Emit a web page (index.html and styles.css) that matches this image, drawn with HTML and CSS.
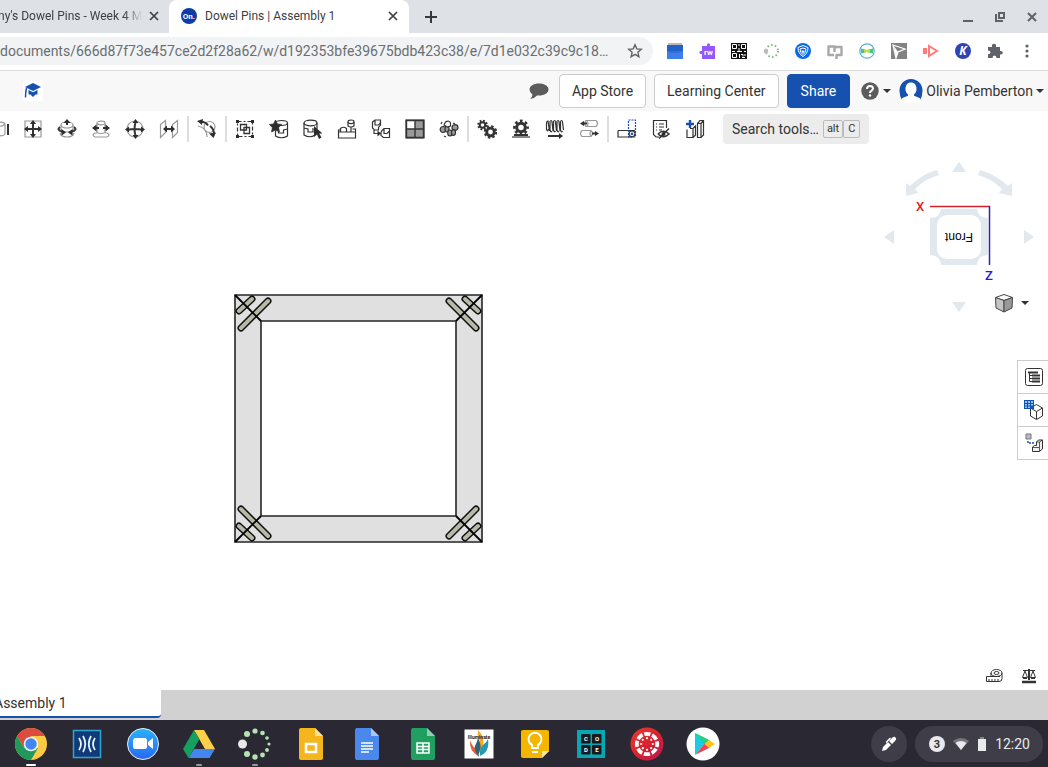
FILE: index.html
```html
<!DOCTYPE html>
<html lang="en">
<head>
<meta charset="utf-8">
<title>Dowel Pins | Assembly 1</title>
<link rel="stylesheet" href="styles.css">
</head>
<body>
<div class="screen">
  <header class="tabstrip">
    <div class="tab tab-back"><span class="tab-title fade">ny's Dowel Pins - Week 4 M</span>
      <button class="tab-close" aria-label="Close tab"><svg width="10" height="10" viewBox="0 0 10 10"><path d="M1 1l8 8M9 1l-8 8" stroke="#3c4043" stroke-width="1.7"/></svg></button></div>
    <div class="tab tab-active">
      <svg width="16" height="16" viewBox="0 0 16 16"><circle cx="8" cy="8" r="8" fill="#0d3ca6"/><text x="8" y="11" text-anchor="middle" class="fav-text">On.</text></svg>
      <span class="tab-title">Dowel Pins | Assembly 1</span>
      <button class="tab-close" aria-label="Close tab"><svg width="10" height="10" viewBox="0 0 10 10"><path d="M1 1l8 8M9 1l-8 8" stroke="#3c4043" stroke-width="1.7"/></svg></button></div>
    <button class="new-tab" aria-label="New tab"><svg width="12" height="12" viewBox="0 0 12 12"><path d="M6 0v12M0 6h12" stroke="#35383c" stroke-width="2"/></svg></button>
    <div class="window-controls">
      <button aria-label="Minimize"><svg width="12" height="12" viewBox="0 0 12 12"><path d="M1 10h10" stroke="#5f6368" stroke-width="2"/></svg></button>
      <button aria-label="Restore"><svg width="12" height="12" viewBox="0 0 12 12" fill="none" stroke="#5f6368" stroke-width="2"><path d="M5 2h5v5H5zM2 3v7h7"/></svg></button>
      <button aria-label="Close"><svg width="12" height="12" viewBox="0 0 12 12"><path d="M2 2l8 8M10 2l-8 8" stroke="#5f6368" stroke-width="2"/></svg></button>
    </div>
  </header>

  <div class="addressbar">
    <div class="url-pill">
      <span class="url">documents/666d87f73e457ce2d2f28a62/w/d192353bfe39675bdb423c38/e/7d1e032c39c9c18…</span>
      <button class="star" aria-label="Bookmark"><svg width="16" height="16" viewBox="0 0 16 16"><path d="M8 1.800l1.800 4.100 4.500.4-3.400 3 1 4.400L8 11.400l-3.900 2.300 1-4.400-3.400-3 4.500-.4z" fill="none" stroke="#5f6368" stroke-width="1.400"/></svg></button>
    </div>
    <div class="extensions">
      <button aria-label="Extension"><svg width="16" height="16" viewBox="0 0 16 16"><path d="M1 0h14v3H1z" fill="#b9bab5"/><path d="M0 2h16v14H0z" fill="#3f7ee8"/><path d="M0 2h16v6H0z" fill="#2462c8"/><path d="M0 8h16l-5 2H4z" fill="#2f6fd8"/></svg></button>
      <button aria-label="Read and write"><svg width="16" height="16" viewBox="0 0 16 16"><path d="M3 3h5V1.500q1.500-2.500 3 0V3h5v13H3v-5H1.500Q-1 9.500 1.500 8H3z" fill="#9557ff"/><text x="9.500" y="12" text-anchor="middle" class="rw">rw</text></svg></button>
      <button aria-label="QR code"><svg width="16" height="16" viewBox="0 0 16 16"><path d="M0 0h16v16H0z" fill="#111"/><g fill="none" stroke="#fff"><path d="M1.500 1.500h4v4h-4zM10.500 1.500h4v4h-4zM1.500 10.500h4v4h-4zM8 1v2M8 5v3M1 8.500h3M6 8.500h5M13 8.500h2M8.500 11v4M10 11.500h2v2M14 11v2M11 14.500h3"/></g></svg></button>
      <button aria-label="Loader"><svg width="16" height="16" viewBox="0 0 16 16"><circle cx="9" cy="8" r="6" fill="none" stroke="#84bd88" stroke-width="2" stroke-dasharray="1.600 2.200"/><circle cx="3" cy="8" r="2.300" fill="#bbb"/></svg></button>
      <button aria-label="Shield"><svg width="16" height="16" viewBox="0 0 16 16"><circle cx="8" cy="8" r="8" fill="#0969e8"/><path d="M8 2.500l5 2q0 6-5 9-5-3-5-9zM8 5l3 1q0 4-3 5.500Q5 10 5 6z" fill="none" stroke="#fff"/><path d="M8 10.200L6.500 8.500Q6.500 7 8 7.700q1.500-.7 1.500.8z" fill="#fff"/></svg></button>
      <button aria-label="Clip"><svg width="16" height="16" viewBox="0 0 16 16"><path d="M7 12H1.500V3.500H8V5.500M9 4h5.500v8H9.500v4M9.500 4H7.500V9" fill="none" stroke="#a8a8a8" stroke-width="2.400" stroke-linejoin="round"/></svg></button>
      <button aria-label="Bow tie"><svg width="16" height="16" viewBox="0 0 16 16"><circle cx="8" cy="8" r="7.200" fill="#fff" stroke="#5aaed0" stroke-width="1.200"/><path d="M2 5.500l6 1.500 6-1.500v5L8 9 2 10.500z" fill="#45c67a"/><path d="M5 6.400L8 7l3-.6v3.200L8 9l-3 .6z" fill="#c4dc3f"/></svg></button>
      <button aria-label="Pointer"><svg width="16" height="16" viewBox="0 0 16 16"><path d="M0 0h16v16H0z" fill="#828282"/><path d="M2 2l12 4-7 3-2 6z" fill="none" stroke="#fff" stroke-width="1.300"/><path d="M3 3l4 6-2 5z" fill="#fff"/></svg></button>
      <button aria-label="Recorder"><svg width="16" height="16" viewBox="0 0 16 16"><path d="M0 5h4v6H0z" fill="#ff7b78"/><path d="M6 3l8 5-8 5z" fill="#fff" stroke="#ff7b78" stroke-width="2"/></svg></button>
      <button aria-label="Kami"><svg width="16" height="16" viewBox="0 0 16 16"><circle cx="8" cy="8" r="8" fill="#2f43b2"/><text x="8" y="12" text-anchor="middle" class="kami">K</text></svg></button>
      <button aria-label="Extensions"><svg width="16" height="16" viewBox="0 0 16 16"><path d="M1 4h4Q4.500.8 7 .8T9 4h4v4q2.800-.5 2.800 1.800T13 11.500V15H9.500q0-2.500-2-2.500t-2 2.500H1v-3.800q2.500 0 2.500-1.900T1 7.500z" fill="#5f6368"/></svg></button>
      <button aria-label="Menu"><svg width="16" height="16" viewBox="0 0 16 16" fill="#5f6368"><circle cx="8" cy="3" r="1.600"/><circle cx="8" cy="8" r="1.600"/><circle cx="8" cy="13" r="1.600"/></svg></button>
    </div>
  </div>

  <div class="appbar">
    <button class="learn" aria-label="Tutorials"><svg width="18" height="18" viewBox="0 0 18 18" fill="#1651b0"><path d="M9 1l8 4-8 4-8-4z"/><path d="M4.500 8L9 10.200 13.500 8v4.500h-2L9 15l-2.500-2.500h-2z"/><path d="M2.500 6q-1 4-1 9.500" fill="none" stroke="#1651b0" stroke-width="1.500"/></svg></button>
    <div class="app-actions">
      <button class="plain comments" aria-label="Comments"><svg width="20" height="18" viewBox="0 0 20 18"><path d="M10 1.500c5.500 0 9.500 2.600 9.500 6s-4 6-9.500 6l-2-.1Q5.500 16.500 1 17q2.500-2 2.400-4.600Q.5 10.500.5 7.500c0-3.400 4-6 9.500-6z" fill="#5c5c5c"/></svg></button>
      <button class="btn">App Store</button>
      <button class="btn">Learning Center</button>
      <button class="btn btn-primary">Share</button>
      <button class="plain help" aria-label="Help"><svg width="18" height="18" viewBox="0 0 18 18"><circle cx="9" cy="9" r="8.700" fill="#5c5c5c"/><path d="M6 7q.1-3 3-3t3 2.500q0 1.300-1.700 2.300Q9 9.500 9 11" fill="none" stroke="#fff" stroke-width="2"/><circle cx="9" cy="13.500" r="1.200" fill="#fff"/></svg><span class="caret"></span></button>
      <button class="plain user"><svg width="24" height="24" viewBox="0 0 24 24"><path d="M12 0A11.500 11.500 0 0 0 .5 12Q.5 17 3 21.500H21Q23.500 17 23.500 12A11.500 11.500 0 0 0 12 0z" fill="#1651b0"/><path d="M12 3.500c3.600 0 5.500 2.500 5.500 6.500 0 2.600-1 4.200-2.500 5.500v1.200l4.500 1.800q3 1.200 3 5.500H1.500q0-4.300 3-5.500L9 16.700v-1.200C7.500 14.200 6.500 12.600 6.500 10c0-4 1.900-6.500 5.500-6.500z" fill="#fff"/></svg><span>Olivia Pemberton</span><span class="caret"></span></button>
    </div>
  </div>

  <div class="toolbar">
    <button aria-label="Mate"><svg viewBox="0 0 20 20"><path class="g" d="M8 4q6-2 8 1v10q-2 3-8 1M8 7q5 1 8-2"/><path d="M19 5v11" stroke-width="2"/></svg></button>
    <button aria-label="Move"><svg viewBox="0 0 20 20"><path class="g" d="M2 2h16v16H2z"/><path class="h" d="M3 10h14M10 3v14"/><path class="f" d="M10 1l3 4H7zM10 19l3-4H7zM1 10l4-3v6zM19 10l-4-3v6z"/></svg></button>
    <button aria-label="Revolute"><svg viewBox="0 0 20 20"><ellipse class="g" cx="10" cy="6" rx="6" ry="3"/><path class="g" d="M4 6v5q6 4 12 0V6M3 14q1 4 7 4t7-4"/><path class="h" d="M3 8q-4 3 3 5M17 8q4 3-3 5M10 6V4"/><path class="f" d="M10 0l3.500 4h-7zM9 13.500L4.500 10v6.500zM11 13.500l4.500-3.500v6.500z"/></svg></button>
    <button aria-label="Slider"><svg viewBox="0 0 20 20"><ellipse class="g" cx="10" cy="4" rx="4" ry="1.800"/><path class="g" d="M6 4.500v9q4 2 8 0v-9M6 14H4q-4 2 0 4h12q4-2 0-4h-2"/><path class="h" d="M4 9h4M12 9h4"/><path class="f" d="M1 9l4.500-3.500v7zM19 9l-4.500-3.500v7z"/></svg></button>
    <button aria-label="Ball"><svg viewBox="0 0 20 20"><circle class="g" cx="10" cy="10" r="8"/><path class="h" d="M2 11q8-2 16 0M11 2q-3 8 0 16"/><path class="f" d="M10.500 0l3 4h-6zM10.500 20l3-4h-6zM0 10.500l4-3v6zM20 10.500l-4-3v6z"/></svg></button>
    <button aria-label="Planar"><svg viewBox="0 0 20 20"><path class="g" d="M1.500 5.500l5-4v12l-5 5zM13.500 5.500l5-4v12l-5 5z"/><path class="h" d="M6 10h8"/><path class="f" d="M4 10l4-3.500v7zM16 10l-4-3.500v7z"/></svg></button>
    <span class="sep"></span>
    <button aria-label="Tangent"><svg viewBox="0 0 20 20"><circle class="g" cx="12.500" cy="8" r="5.500"/><path class="g" d="M1 7q9 2 9 11"/><path class="h" d="M4 2.500q5 .5 7 4M13 7q4 3 4 8"/><path class="f" d="M0 2l6-2-1 6zM16.500 19l-4.500-4.500 7-1z"/></svg></button>
    <span class="sep"></span>
    <button aria-label="Group"><svg viewBox="0 0 20 20"><path d="M2.500 2.500h15v15h-15z" stroke-dasharray="4 2 2 2"/><path d="M5.500 5.500h6V11h-6zM9 8.500h5.500v6H9z" stroke-width="1.300"/><path class="f" d="M1 1h3v3H1zM16 1h3v3h-3zM1 16h3v3H1zM16 16h3v3h-3z"/></svg></button>
    <button aria-label="New part"><svg viewBox="0 0 20 20"><ellipse cx="12.500" cy="4" rx="6" ry="2.500"/><path d="M6.500 8v9q6 3.500 12 0V4M9.500 11v3h5v-3l4-1"/><path d="M6.500 1l1.900 4 4.300.5-3.100 3 .8 4.500-3.900-2.200L2.600 13l.8-4.500-3.100-3L4.600 5z" fill="#2d2d2d" stroke-width=".8"/></svg></button>
    <button aria-label="Select part"><svg viewBox="0 0 20 20"><ellipse cx="7.500" cy="4" rx="6.500" ry="2.800"/><path d="M1 4v12q6 3.500 11 0M14 4v6M1 9l4 1v3h5V9"/><path class="f" d="M11 7l8.500 7.500h-3.300L18.500 18.500 16 20l-2-4.500-3 2.500z"/></svg></button>
    <button aria-label="Replicate"><svg viewBox="0 0 20 20"><path d="M1.500 13h17v6h-17zM3.500 13V9.500q3-2.500 6 0V13M18.500 13v-3h-3M1.500 13v-2h2"/><ellipse cx="14" cy="2.800" rx="3" ry="1.800"/><path d="M11 3v4q3 2 6 0V3M14 8v5"/></svg></button>
    <button aria-label="Transform"><svg viewBox="0 0 20 20"><path d="M1.500 3L4 1h5.500v5L7.500 8.500v2.500h-4l-2-2zM4 1v5h3.500l2-2.500M11 11.500L13 9.500h5.500v9h-6L10 16.500v-3zM13 9.500v5h3l2.500-2.500M3 11v3.500h5"/><path class="f" d="M10 14.500l-3.500-3v6z"/></svg></button>
    <button aria-label="Pattern"><svg viewBox="0 0 20 20"><path d="M1 1h18v18H1z" fill="#999"/><path d="M2 2h8v8H2z" fill="#fff" stroke="none"/><path d="M1.500 1.500h17v17h-17zM10 1v18M1 10h18" stroke-width="1.400"/></svg></button>
    <button aria-label="Circular pattern"><svg viewBox="0 0 20 20"><g fill="#999"><ellipse cx="4" cy="10.500" rx="2.800" ry="3"/><ellipse cx="8" cy="10" rx="2" ry="3"/><ellipse cx="16" cy="8.500" rx="3" ry="2.800"/><ellipse cx="11" cy="14" rx="2.300" ry="3"/><ellipse cx="14.500" cy="13.500" rx="2" ry="2.800"/></g><path d="M5 6l1.500-3q4-2 5 1v3l-3 1zM14 4l2 1M2 5l1-2M5 17l2 1" fill="#fff"/></svg></button>
    <span class="sep"></span>
    <button aria-label="Gear relation"><svg viewBox="0 0 20 20"><circle cx="5.500" cy="6" r="2.800" stroke-width="2"/><circle cx="5.500" cy="6" r="4.300" stroke-width="2" stroke-dasharray="1.800 1.577"/><circle cx="13.500" cy="13" r="3.800" stroke-width="2.800"/><circle cx="13.500" cy="13" r="5.700" stroke-width="2" stroke-dasharray="2.400 2.077"/></svg></button>
    <button aria-label="Rack and pinion"><svg viewBox="0 0 20 20"><circle cx="10" cy="8.500" r="4.300" stroke-width="3"/><circle cx="10" cy="8.500" r="6.600" stroke-width="2.600" stroke-dasharray="2.700 2.483" stroke-dashoffset="1.350"/><path d="M3 16h14" stroke-width="2"/><path d="M1 18h18" stroke="#888" stroke-width="2"/></svg></button>
    <button aria-label="Screw"><svg viewBox="0 0 20 20"><path d="M1.500 5q0-3 1.500-3l1.500 10M4.500 3q2-3 2.500 0l1 9M8 3q2-3 2.500 0l1 9M11.500 3q2-3 2.500 0l1 9M15 3q2-3 2.500 0l1 8M1.500 5v5q1 4 2 0M5 3v8q1 3 2 1M8.500 3v8q1 3 2 1M12 3v8q1 3 2 1M15.500 3v8q1 3 2 1" stroke-width="1.200"/><path class="h" d="M3 17h12"/><path class="f" d="M18 17l-4-3v6z"/></svg></button>
    <button aria-label="Linear relation"><svg viewBox="0 0 20 20"><path class="g" d="M7 1.500h10q3 3 0 6H7q-2.500-3 0-6zM3 11.500h9q3 3 0 6H3q-3-3 0-6zM8 2q2 3 0 5M12 12q-2 3 0 5"/><path class="h" d="M4 4.500h4M13 14.500h4"/><path class="f" d="M1 4.500L5 2v5zM20 14.500L16 12v5z"/></svg></button>
    <span class="sep"></span>
    <button aria-label="Drag"><svg viewBox="0 0 20 20"><path d="M1 11.500h17M1 11.500v6.500h14"/><g stroke="#1651b0"><path d="M11.500 1h7v17h-7z" stroke-dasharray="2 1"/><circle cx="15" cy="14.800" r="3" stroke="#333"/><circle cx="15" cy="14.800" r=".8"/></g></svg></button>
    <button aria-label="Display states"><svg viewBox="0 0 20 20"><path d="M8 18H5L2.500 15.500V1.500h13V9M5 5h1M8 5h5M5 8h1M8 8h5M5 11h1M8 11h3"/><path d="M7 15q5.500-5.500 11 0-5.500 5.500-11 0M8 19.500L18 9.500" stroke-width="1.500"/><circle class="f" cx="12.500" cy="15" r="2"/></svg></button>
    <button aria-label="Insert feature"><svg viewBox="0 0 20 20"><path d="M2 10.500v8h6v-9M5 9.500h3l2.500-2.500v9L8 18.500M12.500 18.500v-14l2.500-3h3.500v14.500l-2.500 2.500zM12.500 4.500H16v14M16 4.500l2.500-3"/><path d="M5 1v8M1 5h8" stroke="#1651b0" stroke-width="2.400"/></svg></button>
    <button class="search"><span>Search tools…</span><kbd>alt</kbd><kbd>C</kbd></button>
  </div>

  <main class="canvas">
    <svg class="model" width="250" height="250" viewBox="0 0 250 250">
      <defs><g id="corner"><g stroke-linecap="round"><path d="M5 17L18 5M7 34L34 7" stroke="#111" stroke-width="7"/><path d="M5 17L18 5M7 34L34 7" stroke="#b7b9a7" stroke-width="4"/></g><path d="M1 1l26 26" stroke="#000" stroke-width="1.800"/></g></defs>
      <path d="M1 1h247v247H1zM27 27v195h195V27z" fill="#e0e0e0" stroke="#252525" stroke-width="1.600"/>
      <use href="#corner"/><use href="#corner" transform="matrix(-1 0 0 1 249 0)"/><use href="#corner" transform="matrix(1 0 0 -1 0 249)"/><use href="#corner" transform="matrix(-1 0 0 -1 249 249)"/>
    </svg>
    <svg class="viewcube" width="160" height="160" viewBox="0 0 160 160">
      <g fill="#e1e8ee"><path d="M79 7l7 10H72zM79 157l7-10H72zM4 82l10-7v14zM154 82l-10-7v14z"/><path d="M57 15l2 5q-14 4-24 14l3 4-12 3V28l4 3Q42 19 57 15zM100 15l-2 5q14 4 24 14l-3 4 13 3V28l-4 3Q115 19 100 15z"/>
      <path d="M61 54h36q1 9 11 9v37q-10 0-11 10H61q-1-10-11-10V63q10 0 11-9z"/></g>
      <rect x="57" y="60" width="44" height="44" rx="10" fill="#fff"/>
      <path d="M50 51.500h60" stroke="#d2232a" stroke-width="1.500"/><path d="M109.500 51v59" stroke="#2b22b8" stroke-width="1.500"/>
      <text class="axis" x="40" y="56" text-anchor="middle" fill="#dc1f26">X</text><text class="axis" x="109" y="125" text-anchor="middle" fill="#2020dd">Z</text>
      <text class="face" text-anchor="middle" transform="translate(79 78) rotate(180)">Front</text>
    </svg>
    <button class="shade" aria-label="View options"><svg width="20" height="20" viewBox="0 0 20 20" stroke="#444" stroke-linejoin="round"><path d="M1.500 4.500L10 1.500l8.500 3L10 7.500z" fill="#fff"/><path d="M1.500 4.500l8.500 3V19l-8-4z" fill="#c5c5c5"/><path d="M10 7.500l8.500-3L18 15l-8 4z" fill="#999"/></svg><span class="caret"></span></button>
    <nav class="sidepanel">
      <button aria-label="Configurations"><svg width="20" height="20" viewBox="0 0 20 20"><rect x="1.500" y="1.500" width="17" height="17" rx="2"/><path d="M4 5.500h10M8 8.500h8M8 11.500h8M8 14.500h8" stroke-width="2"/><path d="M5.500 5v9.500h3M5.500 8.500h3M5.500 11.500h3"/></svg></button>
      <button aria-label="Tables"><svg width="20" height="20" viewBox="0 0 20 20"><path d="M6.500 8L12.500 4.500l6 3.500v8l-6 3.500-6-3.500zM6.500 8l6 3.500 6-3.500M12.500 11.500V19" fill="#fff"/><path d="M0 0h10v9H0z" fill="#1651b0" stroke="none"/><path d="M1 1h2v2H1zM4 1h2v2H4zM7 1h2v2H7zM1 4h2v1.500H1zM4 4h2v1.500H4zM7 4h2v1.500H7zM1 6.500h2V8H1zM4 6.500h2V8H4z" fill="#8cc8f5" stroke="none"/></svg></button>
      <button aria-label="Exploded views"><svg width="20" height="20" viewBox="0 0 20 20"><path d="M2 1h5v5H2z" fill="#bbb" stroke="#777"/><path d="M4 8v2h6" stroke="#1651b0" stroke-width="1.500" stroke-dasharray="2 1"/><path d="M12.500 9l2-2h4v9l-3 2.500h-7V14l2-1.500h2z" fill="#eee"/><path d="M12.500 9h3v5.500h-7M15.500 9l3-2M15.500 14.500v4" stroke-width=".8"/></svg></button>
    </nav>
    <div class="measure">
      <button aria-label="Measure"><svg width="18" height="16" viewBox="0 0 18 16"><path d="M1.500 8.500H10M1.500 8.500v5H14q3 0 3-3V5M4 13v-2M7 13v-2M10 13v-2M13 13v-2"/><ellipse cx="11.500" cy="5" rx="5.500" ry="3.500"/><ellipse cx="11.500" cy="5" rx="2.500" ry="1.500"/><path d="M6 5v3.500h9"/></svg></button>
      <button aria-label="Mass properties"><svg width="16" height="16" viewBox="0 0 16 16"><path d="M2 2.500h12M7.500 1v11M8.500 1v11M4 3L1.500 9.500h5zM12 3L9.500 9.500h5zM2 10.500h4M10 10.500h4"/><path d="M1 14h14" stroke-width="2.500"/></svg></button>
    </div>
  </main>

  <footer class="doc-tabs"><button class="doc-tab">Assembly 1</button></footer>

  <nav class="shelf">
    <div class="apps">
      <button class="open current" aria-label="Chrome"><svg viewBox="0 0 34 34"><circle cx="17" cy="17" r="16" fill="#fbcb43"/><path d="M3.100 9A16 16 0 0 1 30.900 9H17L10.100 21z" fill="#da4b40"/><path d="M3.100 9A16 16 0 0 0 17 33L23.900 21H10.100z" fill="#20995a"/><circle cx="17" cy="17" r="7.300" fill="#eef2fb"/><circle cx="17" cy="17" r="5.700" fill="#4386ee"/></svg></button>
      <button aria-label="Hearing"><svg viewBox="0 0 34 34"><path d="M3.500 3.500h27v27h-27z" fill="#103a78" stroke="#31a6d2" stroke-width="1.500"/><path d="M9 11q4 6 0 12M13 9q4.500 8 0 16M25 11q-4 6 0 12M21 9q-4.500 8 0 16" fill="none" stroke="#e6f3ff" stroke-width="1.800"/></svg></button>
      <button aria-label="Zoom"><svg viewBox="0 0 34 34"><defs><linearGradient id="zm" x2="0" y2="1"><stop stop-color="#27b3fb"/><stop offset="1" stop-color="#2a68f4"/></linearGradient></defs><circle cx="17" cy="17" r="15.500" fill="url(#zm)" stroke="#eee"/><rect x="7" y="11" width="14" height="11" rx="2.500" fill="#fff"/><path d="M22 15l5-4v11l-5-4z" fill="#fff"/></svg></button>
      <button class="open" aria-label="Drive"><svg viewBox="0 0 34 34"><path d="M12 3h10l11 19H23z" fill="#fcd048"/><path d="M12 3l5.500 9L6.500 31 1 22z" fill="#15a060"/><path d="M12 22h21l-5.500 9h-21z" fill="#4486ef"/></svg></button>
      <button class="open" aria-label="Loader"><svg viewBox="0 0 34 34" fill="#b7e3b5"><circle cx="4.500" cy="17" r="4.500" fill="#e8e8e8"/><circle cx="9" cy="7" r="3"/><circle cx="17" cy="4" r="2.600"/><circle cx="24.500" cy="6" r="2.300"/><circle cx="29" cy="11" r="1.800"/><circle cx="31" cy="17" r="1.600"/><circle cx="29" cy="23" r="1.900"/><circle cx="24.500" cy="28" r="2.400"/><circle cx="17" cy="30" r="2.700"/><circle cx="9" cy="27" r="3"/></svg></button>
      <button aria-label="Slides"><svg viewBox="0 0 34 34"><path d="M7 1h14l8 8v22q0 2-2 2H7q-2 0-2-2V3q0-2 2-2z" fill="#f5b51c"/><path d="M21 1l8 8h-8z" fill="#fbdf91"/><path d="M12 17h10v8H12z" fill="none" stroke="#fff" stroke-width="2.500"/></svg></button>
      <button aria-label="Docs"><svg viewBox="0 0 34 34"><path d="M7 1h14l8 8v22q0 2-2 2H7q-2 0-2-2V3q0-2 2-2z" fill="#4a88ee"/><path d="M21 1l8 8h-8z" fill="#a8c7fb"/><path d="M11 16h12M11 19h12M11 22h12M11 25h8" stroke="#fff" stroke-width="1.500"/></svg></button>
      <button aria-label="Sheets"><svg viewBox="0 0 34 34"><path d="M7 1h14l8 8v22q0 2-2 2H7q-2 0-2-2V3q0-2 2-2z" fill="#209f60"/><path d="M21 1l8 8h-8z" fill="#8fd0b0"/><path d="M11 16h12v10H11zM17 16v10M11 19.500h12M11 22.500h12" fill="none" stroke="#fff" stroke-width="1.500"/></svg></button>
      <button aria-label="Illuminate"><svg viewBox="0 0 34 34"><path d="M2.500 2.500h29v29h-29z" fill="#fff"/><path d="M16 3q-1 5 1 9t0 14q6-7 4-15-1-4-5-8z" fill="#f6a823"/><path d="M16 29q-9-5-8-16 2 6 5 8t3 8z" fill="#e15f3a"/><path d="M17 30q-5-6-4-11 2-4 3-8 4 8 2 12t-1 7z" fill="#2f6177"/><path d="M18 29q-1-7 3-11 4-3 5-6 2 13-8 17z" fill="#239aae"/><text x="17" y="12" text-anchor="middle" class="illum">Illuminate</text></svg></button>
      <button aria-label="Keep"><svg viewBox="0 0 34 34"><path d="M5 3h24q2 0 2 2v19l-7 7H5q-2 0-2-2V5q0-2 2-2z" fill="#f5b600"/><path d="M24 31v-7h7z" fill="#fde49b"/><path d="M14 21v-3a6.500 6.500 0 1 1 6 0v3zM14 25h6" fill="none" stroke="#fff" stroke-width="2"/></svg></button>
      <button aria-label="Code.org"><svg viewBox="0 0 34 34"><path d="M3 3h28v28H3z" fill="#09a7b5"/><g fill="#171a1d"><rect x="7" y="7" width="9.500" height="9.500" rx="1"/><rect x="18" y="7" width="9.500" height="9.500" rx="1"/><rect x="7" y="18" width="9.500" height="9.500" rx="1"/><rect x="18" y="18" width="9.500" height="9.500" rx="1"/></g><g class="code" text-anchor="middle"><text x="12" y="14">C</text><text x="23" y="14">O</text><text x="12" y="25">D</text><text x="23" y="25">E</text></g></svg></button>
      <button aria-label="Canvas"><svg viewBox="0 0 34 34"><defs><linearGradient id="cv" x2="1" y2="1"><stop stop-color="#ee3933"/><stop offset=".5" stop-color="#d8232f"/><stop offset="1" stop-color="#b81654"/></linearGradient></defs><circle cx="17" cy="17" r="16.500" fill="url(#cv)"/><circle cx="17" cy="17" r="10.200" fill="none" stroke="#fff" stroke-width="3.800" stroke-dasharray="6.200 1.811" stroke-dashoffset="3.100"/><g fill="#fff"><circle cx="17" cy="11.200" r="1.100"/><circle cx="21.200" cy="12.800" r="1.100"/><circle cx="22.800" cy="17" r="1.100"/><circle cx="21.200" cy="21.200" r="1.100"/><circle cx="17" cy="22.800" r="1.100"/><circle cx="12.800" cy="21.200" r="1.100"/><circle cx="11.200" cy="17" r="1.100"/><circle cx="12.800" cy="12.800" r="1.100"/></g></svg></button>
      <button aria-label="Play Store"><svg viewBox="0 0 34 34"><circle cx="17" cy="17" r="16.500" fill="#fff"/><path d="M9 6l13 6.500L9 28z" fill="#17cde5"/><path d="M9 6l15 7.500-5 4z" fill="#22d284"/><path d="M9 28l15-7.500-5-4.500z" fill="#f04458"/><path d="M23 13l6 4-6 4-4.500-4z" fill="#ffc51d"/></svg></button>
    </div>
    <div class="tray">
      <button class="stylus" aria-label="Stylus tools"><svg width="16" height="16" viewBox="0 0 16 16" fill="#fff"><path d="M1 15l1-4 5-5 3 3-5 5z"/><path d="M8 5l3-3q2-2 3.500-.5T14 5l-3 3zM4.500 6L9 1.500l1 1L5.500 7z"/></svg></button>
      <button class="status"><svg width="16" height="16" viewBox="0 0 16 16"><circle cx="8" cy="8" r="8" fill="#e8eaed"/><text x="8" y="12" text-anchor="middle" class="count">3</text></svg>
        <svg width="16" height="14" viewBox="0 0 16 14"><path d="M0 4q8-6 16 0l-8 9z" fill="#77767f"/><path d="M2.500 6q5.500-4 11 0L8 13z" fill="#e8eaed"/></svg>
        <svg width="10" height="14" viewBox="0 0 10 14"><path d="M3 0h4v2H3z" fill="#85848c"/><path d="M1 2h8v12H1z" fill="#e8eaed"/></svg>
        <span>12:20</span></button>
    </div>
  </nav>
</div>
</body>
</html>
```
FILE: styles.css
```css
* { box-sizing: border-box; }
body { margin: 0; background: #fff; color: #333; font: 14px/20px Roboto, "Liberation Sans", sans-serif; }
button { border: 0; padding: 0; margin: 0; background: none; color: inherit; font: inherit; flex: none; display: flex; align-items: center; justify-content: center; cursor: pointer; }
svg { display: block; flex: none; }
.screen { display: flex; flex-direction: column; height: 100vh; overflow: hidden; }

.tabstrip { display: flex; height: 33px; background: #dee1e6; flex: none; }
.tab { display: flex; align-items: center; height: 33px; padding-bottom: 1px; font-size: 12px; color: #3c4043; }
.tab-back { width: 169px; padding-right: 10px; }
.tab-active { width: 240px; padding: 0 11px 1px 12px; background: #fff; border-radius: 8px 8px 0 0; gap: 8px; }
.tab-title { flex: 1; white-space: nowrap; overflow: hidden; }
.fade { margin-left: -2px; margin-right: 4px; -webkit-mask-image: linear-gradient(90deg, #000 86%, transparent 98%); mask-image: linear-gradient(90deg, #000 86%, transparent 98%); }
.tab-close { width: 10px; height: 16px; }
.new-tab { width: 44px; }
.window-controls { display: flex; margin-left: auto; }
.window-controls button { width: 32px; }
.fav-text { font: bold 8px Roboto, sans-serif; fill: #fff; }
.rw { font: bold 8px Roboto, sans-serif; fill: #fff; }
.kami { font: italic bold 12px "Open Sans", sans-serif; fill: #fff; }

.addressbar { display: flex; align-items: center; height: 38px; padding: 0 5px 1px 0; border-bottom: 1px solid #dcdcdc; flex: none; }
.url-pill { display: flex; align-items: center; flex: 1; min-width: 0; height: 28px; margin-right: 6px; padding-right: 10px; background: #f1f3f4; border-radius: 0 14px 14px 0; }
.url { flex: 1; min-width: 0; overflow: hidden; white-space: nowrap; color: #6a6e72; }
.extensions { display: flex; }
.extensions button { width: 32px; height: 28px; }

.appbar { display: flex; align-items: center; justify-content: space-between; height: 40px; padding: 0 4px 0 23px; background: #f8f8f8; flex: none; }
.learn { width: 20px; height: 20px; background: #fff; border-radius: 2px; }
.app-actions { display: flex; align-items: center; gap: 8px; }
.plain { gap: 3px; }
.comments { margin-right: 2px; }
.btn { height: 34px; padding: 0 12px; border: 1px solid #ccc; border-radius: 4px; background: #fff; }
.btn-primary { padding: 0 13px; background: #1651b0; border-color: #1651b0; color: #fff; }
.help { gap: 4px; margin-left: 3px; }
.caret { border: 4px solid transparent; border-top-color: #333; border-bottom: 0; }

.toolbar { display: flex; align-items: center; height: 36px; margin-left: -18px; flex: none; }
.toolbar button { width: 34px; height: 32px; }
.toolbar svg { width: 20px; height: 20px; fill: none; stroke: #333; stroke-width: 1.2; }
.toolbar .g { stroke: #999; }
.toolbar .h { stroke-width: 2; }
.toolbar .f { fill: #2d2d2d; stroke: none; }
.sep { width: 4px; height: 26px; border: 1px solid #fff; border-width: 0 1px; background: #ddd; flex: none; }
.toolbar .search { width: auto; height: 30px; margin-left: 11px; padding: 0 9px; background: #ececec; border-radius: 4px; }
.search span { margin-right: 4px; }
.search kbd { height: 18px; padding: 0 3px; border: 1px solid #bbb; border-radius: 2px; font: 11px/16px Roboto, sans-serif; }
.search kbd + kbd { padding: 0 4px; }

.canvas { position: relative; flex: 1; min-height: 0; }
.model { position: absolute; left: 234px; top: 147px; }
.viewcube { position: absolute; right: 8px; top: 8px; }
.axis { font: 500 13px Roboto, sans-serif; }
.face { font: 12px "Liberation Sans", sans-serif; fill: #000; }
.shade { position: absolute; right: 19px; top: 146px; gap: 7px; }
.sidepanel { position: absolute; right: 0; top: 213px; border: 1px solid #ccc; border-width: 0 0 1px 1px; }
.sidepanel button { width: 30px; height: 33px; padding-left: 2px; border-top: 1px solid #ccc; }
.sidepanel svg, .measure svg { fill: none; stroke: #333; }
.measure { position: absolute; right: 11px; bottom: 6px; display: flex; gap: 18px; }

.doc-tabs { height: 30px; background: #d1d1d1; flex: none; display: flex; align-items: flex-start; }
.doc-tab { width: 167px; height: 28px; margin-left: -6px; justify-content: flex-start; background: #fff; border-bottom: 2px solid #1651b0; border-radius: 0 0 4px 0; }

.shelf { display: flex; justify-content: space-between; align-items: center; height: 47px; padding: 0 5px 0 3px; background: #2a2933; flex: none; }
.apps { display: flex; height: 47px; }
.apps button { position: relative; width: 56px; }
.apps svg { width: 34px; height: 34px; }
.open::after { content: ""; position: absolute; left: 25px; bottom: 1px; width: 6px; height: 2px; border-radius: 1px; background: #9998a0; }
.current::after { left: 23px; width: 10px; background: #fff; }
.illum { font: bold 5px Roboto, sans-serif; fill: #222; }
.code { font: bold 6px Roboto, sans-serif; fill: #fff; }
.tray { display: flex; gap: 8px; }
.stylus { width: 36px; height: 36px; border-radius: 18px; background: #3f3e48; }
.status { height: 36px; padding: 0 13px 0 14px; gap: 8px; border-radius: 18px; background: #3f3e48; color: #e8eaed; }
.count { font: bold 11px Roboto, sans-serif; fill: #333; }
```
